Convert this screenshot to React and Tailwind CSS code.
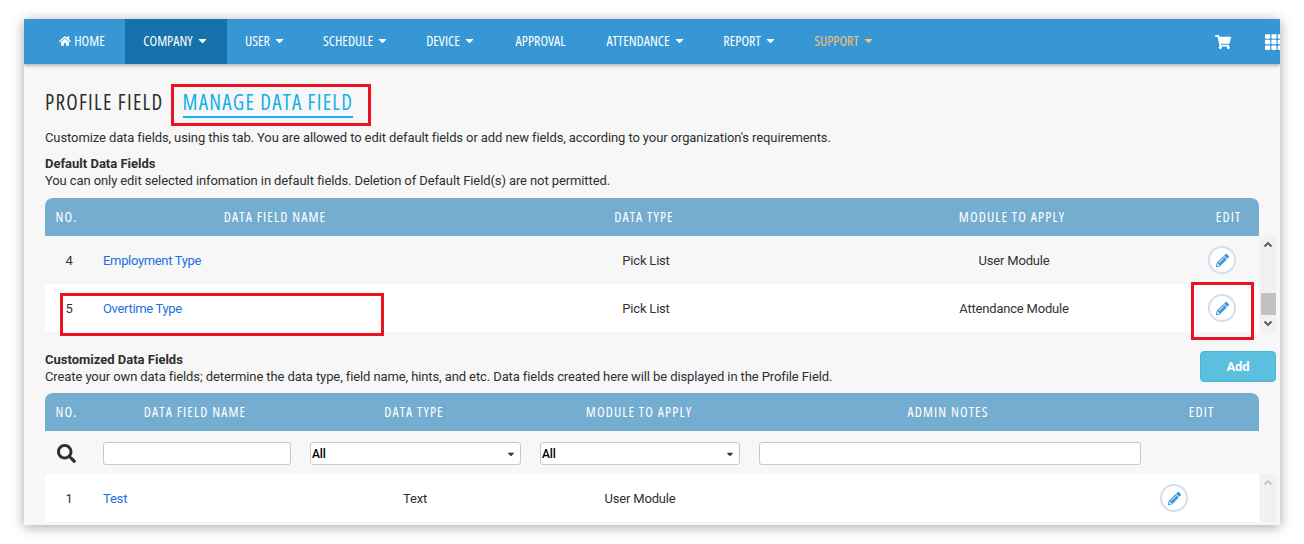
import { FaHome, FaCaretDown, FaShoppingCart, FaTh, FaPencilAlt, FaSearch } from 'react-icons/fa'

const navItems = [
  { label: 'HOME', width: 'w-[86px]', home: true },
  { label: 'COMPANY', width: 'w-[102px]', caret: true, active: true },
  { label: 'USER', width: 'w-[77px]', caret: true },
  { label: 'SCHEDULE', width: 'w-[104px]', caret: true },
  { label: 'DEVICE', width: 'w-[86px]', caret: true },
  { label: 'APPROVAL', width: 'w-[93px]' },
  { label: 'ATTENDANCE', width: 'w-[118px]', caret: true },
  { label: 'REPORT', width: 'w-[90px]', caret: true },
  { label: 'SUPPORT', width: 'w-[99px]', caret: true, support: true },
]

const condensed = 'font-["Open_Sans",sans-serif] font-stretch-condensed'

function EditButton() {
  return (
    <span className="flex h-[28px] w-[28px] items-center justify-center rounded-full border-2 border-[#d3dff0] bg-white text-[#3a97d6]">
      <FaPencilAlt size={13} />
    </span>
  )
}

function ScrollArrow({ up, faded }) {
  return (
    <svg width="10" height="7" viewBox="0 0 10 7" className={faded ? 'text-[#c4c4c4]' : 'text-[#555555]'}>
      <path d={up ? 'M1.5 5.5 L5 2 L8.5 5.5' : 'M1.5 1.5 L5 5 L8.5 1.5'} fill="none" stroke="currentColor" strokeWidth="1.8" />
    </svg>
  )
}

function SelectBox({ className }) {
  return (
    <div className={`relative h-[23px] ${className}`}>
      <select className="h-full w-full appearance-none rounded-[3px] border border-[#c8c8c8] bg-white pl-[1px] pt-px text-[12px] font-medium text-black">
        <option>All</option>
      </select>
      <FaCaretDown size={10} className="pointer-events-none absolute right-[5px] top-[7px] text-[#333333]" />
    </div>
  )
}

function Row({ no, name, type, module, white }) {
  return (
    <div className={`grid h-[48px] grid-cols-[48px_373px_360px_376px_57px] items-center tracking-[-0.2px] text-[#333333] ${white ? 'bg-white' : 'bg-[#f7f7f7]'}`}>
      <span className="text-center">{no}</span>
      <a className="pl-[10px] tracking-[-0.33px] text-[#1f6fe0]">{name}</a>
      <span className="text-center">{type}</span>
      <span className="text-center">{module}</span>
      <span className="pl-[6px]"><EditButton /></span>
    </div>
  )
}

export default function App() {
  return (
    <div className="h-[544px] w-[1304px] overflow-hidden bg-white pl-[24px] pt-[19px]">
      <div className={`h-[506px] w-[1256px] overflow-hidden bg-[#f7f7f7] font-["Roboto",sans-serif] text-[13px] leading-[17px] tracking-[-0.1px] text-[#2f2f2f] shadow-[0_2px_12px_rgba(0,0,0,0.35)]`}>
        {/* Top nav */}
        <nav className={`flex h-[45px] items-stretch bg-[#3797d5] pl-[15px] text-[14px] tracking-normal text-white shadow-[0_2px_3px_rgba(0,0,0,0.25)] ${condensed}`}>
          {navItems.map(item => (
            <a
              key={item.label}
              className={`flex shrink-0 items-center justify-center gap-[3px] pb-[2px] ${item.width} ${item.active ? 'bg-[#1672ab]' : ''} ${item.support ? 'text-[#f2c078]' : ''}`}
            >
              {item.home && <FaHome size={12} />}
              {item.label}
              {item.caret && <FaCaretDown size={13} />}
            </a>
          ))}
          <div className="-mr-[3px] ml-auto flex shrink-0 items-center gap-[34px]">
            <FaShoppingCart size={16} />
            <FaTh size={18} />
          </div>
        </nav>

        <div className="w-[1252px] pl-[21px]">
          {/* Title tabs */}
          <div className={`relative mt-[22px] flex h-[32px] items-start gap-[19px] text-[21px] leading-[32px] tracking-[1.25px] ${condensed}`}>
            <span>PROFILE FIELD</span>
            <span className="h-[32px] border-b-2 border-[#12b0ec] text-[#12b0ec]">MANAGE DATA FIELD</span>
            <div className="absolute left-[126px] top-[-2px] h-[42px] w-[200px] border-[3px] border-[#ea1522]" />
          </div>

          <p className="mt-[11px] h-[18px] leading-[18px]">Customize data fields, using this tab. You are allowed to edit default fields or add new fields, according to your organization's requirements.</p>
          <h3 className="mt-[8px] font-bold tracking-normal">Default Data Fields</h3>
          <p>You can only edit selected infomation in default fields. Deletion of Default Field(s) are not permitted.</p>

          {/* Default table */}
          <div className="relative mt-[9px]">
            <div className={`grid h-[38px] w-[1214px] grid-cols-[43px_374px_364px_372px_61px] items-center rounded-t-lg bg-[#74add0] pb-[2px] text-center text-[14px] font-medium tracking-[1.1px] text-white ${condensed}`}>
              <span>NO.</span>
              <span>DATA FIELD NAME</span>
              <span>DATA TYPE</span>
              <span>MODULE TO APPLY</span>
              <span>EDIT</span>
            </div>
            <div className="flex">
              <div className="w-[1214px]">
                <Row no="4" name="Employment Type" type="Pick List" module="User Module" />
                <Row no="5" name="Overtime Type" type="Pick List" module="Attendance Module" white />
              </div>
              <div className="ml-px flex w-[16px] flex-col items-center bg-[#f1f1f1]">
                <span className="flex h-[16px] items-center"><ScrollArrow up /></span>
                <span className="mt-[41px] h-[22px] w-[15px] bg-[#c1c1c1]" />
                <span className="flex h-[17px] items-center"><ScrollArrow /></span>
              </div>
            </div>
            <div className="absolute left-[15px] top-[95px] h-[43px] w-[324px] border-[3px] border-[#ea1522]" />
            <div className="absolute left-[1146px] top-[84px] h-[58px] w-[63px] border-[3px] border-[#ea1522]" />
          </div>

          {/* Customized section */}
          <div className="mt-[19px] flex h-[34px] justify-between">
            <div>
              <h3 className="font-bold tracking-normal">Customized Data Fields</h3>
              <p>Create your own data fields; determine the data type, field name, hints, and etc. Data fields created here will be displayed in the Profile Field.</p>
            </div>
            <button className="h-[31px] w-[76px] rounded border border-[#46b8da] bg-[#5bc0de] font-bold text-white">Add</button>
          </div>

          <div className="mt-[8px]">
            <div className={`grid h-[38px] w-[1214px] grid-cols-[43px_214px_224px_226px_392px_115px] items-center rounded-t-lg bg-[#74add0] pb-[2px] text-center text-[14px] font-medium tracking-[1.1px] text-white ${condensed}`}>
              <span>NO.</span>
              <span>DATA FIELD NAME</span>
              <span>DATA TYPE</span>
              <span>MODULE TO APPLY</span>
              <span>ADMIN NOTES</span>
              <span>EDIT</span>
            </div>
            {/* Filter row */}
            <div className="flex h-[43px] w-[1214px] items-center pt-[2px]">
              <span className="flex w-[43px] justify-center"><FaSearch size={19} /></span>
              <input className="ml-[15px] h-[23px] w-[188px] rounded-[3px] border border-[#c8c8c8] bg-white" />
              <SelectBox className="ml-[19px] w-[211px]" />
              <SelectBox className="ml-[19px] w-[200px]" />
              <input className="ml-[19px] h-[23px] w-[382px] rounded-[3px] border border-[#c8c8c8] bg-white" />
            </div>
            <div className="flex">
              <div className="grid h-[48px] w-[1214px] grid-cols-[48px_227px_190px_260px_376px_113px] items-center bg-white tracking-[-0.2px]">
                <span className="text-center">1</span>
                <a className="pl-[10px] text-[#1f6fe0]">Test</a>
                <span className="text-center">Text</span>
                <span className="text-center">User Module</span>
                <span />
                <span className="pl-[14px]"><EditButton /></span>
              </div>
              <div className="ml-px flex h-[48px] w-[16px] flex-col items-center bg-[#f1f1f1]">
                <span className="flex h-[16px] items-center"><ScrollArrow up faded /></span>
              </div>
            </div>
          </div>
        </div>
      </div>
    </div>
  )
}
